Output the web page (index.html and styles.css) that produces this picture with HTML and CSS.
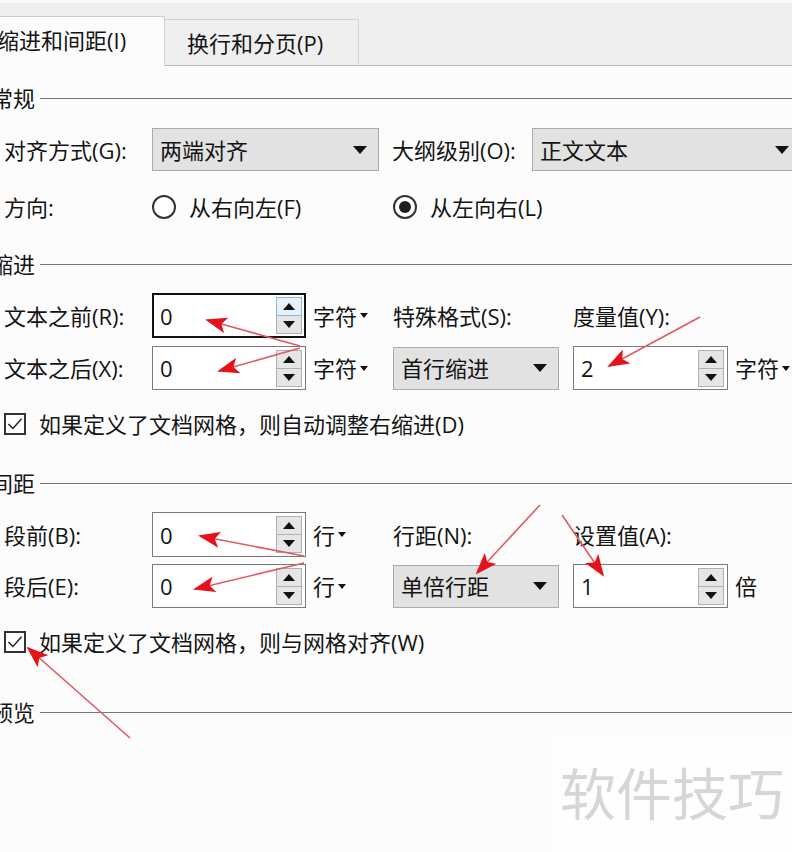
FILE: index.html
```html
<!DOCTYPE html>
<html lang="zh-CN">
<head>
<meta charset="utf-8">
<title>段落</title>
<link rel="stylesheet" href="styles.css">
</head>
<body>
<div class="tabbar">
  <div class="tab active">缩进和间距(I)</div>
  <div class="tab">换行和分页(P)</div>
</div>

<div class="panel">
  <div class="group g-general"><span>常规</span></div>

  <div class="row r-align">
    <span class="lbl">对齐方式(G):</span>
    <div class="select s-align"><span class="sv">两端对齐</span><i class="caret"></i></div>
    <span class="lbl-outline">大纲级别(O):</span>
    <div class="select s-outline"><span class="sv">正文文本</span><i class="caret"></i></div>
  </div>

  <div class="row r-dir">
    <span class="lbl">方向:</span>
    <label class="radio-opt"><i class="radio"></i><span>从右向左(F)</span></label>
    <label class="radio-opt"><i class="radio on"></i><span>从左向右(L)</span></label>
  </div>

  <div class="group g-indent"><span>缩进</span></div>

  <div class="grid g1">
    <span class="lbl">文本之前(R):</span>
    <div class="spin focus"><span class="val">0</span><div class="spinner"><b class="sb hot"><i class="up"></i></b><b class="sb"><i class="down"></i></b></div></div>
    <span class="unit">字符<i class="mini"></i></span>
    <span class="lbl">特殊格式(S):</span>
    <span class="lbl">度量值(Y):</span>
    <span></span>

    <span class="lbl">文本之后(X):</span>
    <div class="spin"><span class="val">0</span><div class="spinner"><b class="sb"><i class="up"></i></b><b class="sb"><i class="down"></i></b></div></div>
    <span class="unit">字符<i class="mini"></i></span>
    <div class="select s-small"><span class="sv">首行缩进</span><i class="caret"></i></div>
    <div class="spin"><span class="val">2</span><div class="spinner"><b class="sb"><i class="up"></i></b><b class="sb"><i class="down"></i></b></div></div>
    <span class="unit">字符<i class="mini"></i></span>
  </div>

  <label class="check-row c1"><i class="check"><svg viewBox="0 0 22 22" width="20" height="20"><polyline points="3,11 8.5,16.5 19,4.5" fill="none" stroke="#222" stroke-width="1.8"/></svg></i><span>如果定义了文档网格，则自动调整右缩进(D)</span></label>

  <div class="group g-space"><span>间距</span></div>

  <div class="grid g2">
    <span class="lbl">段前(B):</span>
    <div class="spin"><span class="val">0</span><div class="spinner"><b class="sb"><i class="up"></i></b><b class="sb"><i class="down"></i></b></div></div>
    <span class="unit">行<i class="mini"></i></span>
    <span class="lbl">行距(N):</span>
    <span class="lbl">设置值(A):</span>
    <span></span>

    <span class="lbl">段后(E):</span>
    <div class="spin"><span class="val">0</span><div class="spinner"><b class="sb"><i class="up"></i></b><b class="sb"><i class="down"></i></b></div></div>
    <span class="unit">行<i class="mini"></i></span>
    <div class="select s-small"><span class="sv">单倍行距</span><i class="caret"></i></div>
    <div class="spin"><span class="val">1</span><div class="spinner"><b class="sb"><i class="up"></i></b><b class="sb"><i class="down"></i></b></div></div>
    <span class="unit">倍</span>
  </div>

  <label class="check-row c2"><i class="check"><svg viewBox="0 0 22 22" width="20" height="20"><polyline points="3,11 8.5,16.5 19,4.5" fill="none" stroke="#222" stroke-width="1.8"/></svg></i><span>如果定义了文档网格，则与网格对齐(W)</span></label>

  <div class="group g-preview"><span>预览</span></div>
</div>

<div class="watermark">软件技巧</div>

<svg class="arrows" width="792" height="852" viewBox="0 0 792 852">
  <defs>
    <marker id="ah" viewBox="0 0 22 16" markerWidth="22" markerHeight="16" refX="20" refY="8" orient="auto" markerUnits="userSpaceOnUse">
      <path d="M0,0 L22,8 L0,16 L5,8 Z" fill="#e3121b"/>
    </marker>
  </defs>
  <g stroke="#df5a63" stroke-width="1.6" fill="none" marker-end="url(#ah)">
    <line x1="300" y1="346" x2="207" y2="320"/>
    <line x1="300" y1="348" x2="219" y2="371"/>
    <line x1="700" y1="317" x2="609" y2="366"/>
    <line x1="304" y1="556" x2="200" y2="536"/>
    <line x1="304" y1="563" x2="195" y2="589"/>
    <line x1="540" y1="505" x2="477" y2="573"/>
    <line x1="562" y1="515" x2="603" y2="575"/>
    <line x1="130" y1="738" x2="28" y2="648"/>
  </g>
</svg>
</body>
</html>
```

FILE: styles.css
```css
* { box-sizing: border-box; }
html, body { margin: 0; padding: 0; }
body {
  width: 792px;
  height: 852px;
  overflow: hidden;
  position: relative;
  background: #fcfcfc;
  font-family: "Open Sans", "Noto Sans CJK SC", "Microsoft YaHei", sans-serif;
  font-size: 22px;
  line-height: 30px;
  color: #141414;
}

/* tabs */
.tabbar {
  height: 66px;
  background: #efefef;
  border-top: 3px solid #f8f8f8;
  border-bottom: 1px solid #bdbdbd;
  display: flex;
  align-items: flex-end;
}
.tab {
  display: flex;
  align-items: center;
  white-space: nowrap;
  flex-shrink: 0;
}
.tab.active {
  width: 185px;
  height: 50px;
  margin-left: -20px;
  margin-bottom: -1px;
  padding-left: 16px;
  padding-bottom: 3px;
  background: #fcfcfc;
  border: 1px solid #cfcfcf;
  border-bottom: none;
  position: relative;
  z-index: 1;
}
.tab:not(.active) {
  width: 195px;
  height: 46px;
  margin-left: -1px;
  padding-left: 22px;
  padding-top: 1px;
  background: #efefef;
  border: 1px solid #d4d4d4;
  border-bottom: none;
}

/* panel */
.panel { padding-top: 17px; }

.group {
  display: flex;
  align-items: center;
  height: 30px;
  margin-left: -9px;
  white-space: nowrap;
}
.group::after {
  content: "";
  flex: 1;
  height: 1px;
  background: #767676;
  margin-left: 5px;
}
.g-indent { margin-top: 27px; }
.g-space { margin-top: 29px; }
.g-preview { margin-top: 40px; }

.row {
  display: flex;
  align-items: center;
  padding-left: 4px;
  white-space: nowrap;
}
.row .lbl { width: 148px; flex-shrink: 0; }
.r-align { margin-top: 15px; height: 43px; }
.r-dir { margin-top: 21px; height: 30px; }

.lbl { white-space: nowrap; }
.lbl-outline { margin-left: 13px; width: 140px; flex-shrink: 0; white-space: nowrap; }

/* select */
.select {
  height: 43px;
  background: #e2e2e2;
  border: 1px solid #ababab;
  display: flex;
  align-items: center;
  justify-content: space-between;
  padding: 0 11px 0 7px;
  flex-shrink: 0;
}
.s-align { width: 227px; }
.s-outline { width: 269px; }
.s-small { width: 166px; }
.caret {
  width: 0; height: 0;
  border-left: 7px solid transparent;
  border-right: 7px solid transparent;
  border-top: 8px solid #111;
}

/* radios */
.radio-opt {
  display: flex;
  align-items: center;
  width: 241px;
  flex-shrink: 0;
}
.radio-opt span { margin-left: 13px; }
.radio {
  width: 24px; height: 24px;
  border: 2px solid #333;
  border-radius: 50%;
  display: flex;
  align-items: center;
  justify-content: center;
  background: #fff;
}
.radio.on::after {
  content: "";
  width: 12px; height: 12px;
  border-radius: 50%;
  background: #1e1e1e;
}

/* grids */
.grid {
  display: grid;
  grid-template-columns: 148px 154px 87px 180px 155px 1fr;
  grid-template-rows: 45px 44px;
  padding-left: 4px;
  align-items: center;
  white-space: nowrap;
}
.g1 { margin-top: 14px; row-gap: 8px; }
.g2 { margin-top: 14px; row-gap: 7px; }
.grid .select { height: 43px; }

/* spin boxes */
.spin {
  height: 100%;
  background: #fff;
  border: 1px solid #7a7a7a;
  display: flex;
  align-items: center;
  padding-left: 7px;
}
.spin.focus { border: 2px solid #111; padding-left: 6px; }
.val { flex: 1; }
.spinner {
  width: 26px;
  height: 37px;
  margin-right: 3px;
  display: flex;
  flex-direction: column;
}
.spin.focus .spinner { margin-right: 2px; }
.sb {
  flex: 1;
  display: flex;
  align-items: center;
  justify-content: center;
  background: #e6e6e6;
  border: 1px solid #b0b0b0;
}
.sb + .sb { margin-top: -1px; }
.sb.hot { background: #e7f1fa; border-color: #8db6dc; position: relative; }
.up, .down { width: 0; height: 0; border-left: 6px solid transparent; border-right: 6px solid transparent; }
.up { border-bottom: 7px solid #111; }
.down { border-top: 7px solid #111; }

.unit {
  padding-left: 7px;
  display: flex;
  align-items: center;
}
.mini {
  width: 0; height: 0;
  margin-left: 3px;
  border-left: 4px solid transparent;
  border-right: 4px solid transparent;
  border-top: 5px solid #111;
}

/* checkboxes */
.check-row {
  display: flex;
  align-items: center;
  height: 30px;
  padding-left: 4px;
  margin-top: 19px;
  white-space: nowrap;
}
.check {
  width: 22px; height: 22px;
  border: 2px solid #333;
  background: #fff;
  display: flex;
  align-items: center;
  justify-content: center;
  margin-right: 13px;
  flex-shrink: 0;
}

/* watermark */
.watermark {
  position: absolute;
  left: 553px;
  top: 735px;
  right: 0;
  bottom: 0;
  background: #fefefe;
  color: #d6d6d6;
  font-family: "Noto Sans CJK SC", sans-serif;
  font-size: 56px;
  line-height: 60px;
  padding: 26px 0 0 7px;
  white-space: nowrap;
}

/* annotation arrows */
.arrows {
  position: absolute;
  left: 0;
  top: 0;
  pointer-events: none;
}
```
